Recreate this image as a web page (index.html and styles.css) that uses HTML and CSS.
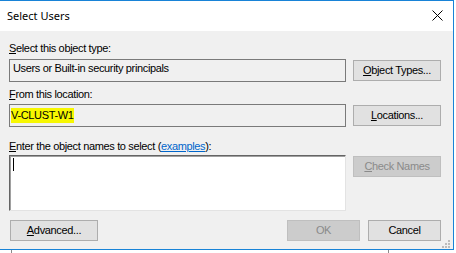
FILE: index.html
```html
<!DOCTYPE html>
<html lang="en">
<head>
    <meta charset="UTF-8">
    <title>Select Users</title>
    <link rel="stylesheet" href="styles.css">
</head>
<body>
    <div class="window">
        <div class="titlebar">
            <span class="title">Select Users</span>
            <svg class="close" width="11" height="11" viewBox="0 0 11 11">
                <path d="M0.5 0.5 L10.5 10.5 M10.5 0.5 L0.5 10.5" stroke="#000" stroke-width="1" fill="none"/>
            </svg>
        </div>

        <div class="dialog">
            <div class="label"><u>S</u>elect this object type:</div>
            <div class="row">
                <div class="field">Users or Built-in security principals</div>
                <button class="btn"><u>O</u>bject Types...</button>
            </div>

            <div class="label label-gap"><u>F</u>rom this location:</div>
            <div class="row row-second">
                <div class="field field-location"><span class="mark">V-CLUST-W1</span></div>
                <button class="btn"><u>L</u>ocations...</button>
            </div>

            <div class="label label-names"><u>E</u>nter the object names to select (<a href="#">examples</a>):</div>
            <div class="row row-names">
                <div class="names"><span class="caret"></span></div>
                <button class="btn btn-check" disabled><u>C</u>heck Names</button>
            </div>

            <div class="footer">
                <button class="btn btn-advanced"><u>A</u>dvanced...</button>
                <div class="footer-right">
                    <button class="btn btn-small" disabled>OK</button>
                    <button class="btn btn-small">Cancel</button>
                </div>
            </div>

            <svg class="grip" width="10" height="9" viewBox="0 0 10 9">
                <rect x="7" y="0" width="2" height="2" fill="#bcbcbc"/>
                <rect x="4" y="3" width="2" height="2" fill="#bcbcbc"/>
                <rect x="7" y="3" width="2" height="2" fill="#bcbcbc"/>
                <rect x="1" y="6" width="2" height="2" fill="#bcbcbc"/>
                <rect x="4" y="6" width="2" height="2" fill="#bcbcbc"/>
                <rect x="7" y="6" width="2" height="2" fill="#bcbcbc"/>
            </svg>
        </div>
    </div>
    <div class="behind">
        <span class="tick"></span>
        <span class="tick tick-right"></span>
    </div>
</body>
</html>
```

FILE: styles.css
```css
body {
    margin: 0;
    padding: 0;
    width: 456px;
    height: 253px;
    overflow: hidden;
    background: #fff;
    font-family: "Liberation Sans", Arial, sans-serif;
    font-size: 11px;
    letter-spacing: -0.35px;
    color: #000;
}

.window {
    width: 454px;
    height: 250px;
    box-sizing: border-box;
    border-top: 1px solid #1883d7;
    border-right: 1px solid #1883d7;
    border-bottom: 1px solid #1883d7;
    display: flex;
    flex-direction: column;
}

.titlebar {
    height: 30px;
    background: #fff;
    display: flex;
    align-items: center;
    justify-content: space-between;
    padding: 0 10px 0 7px;
}

.title {
    font-family: "Noto Sans", "Open Sans", sans-serif;
    font-size: 11px;
    letter-spacing: 0;
    line-height: 16px;
    margin-top: -1px;
}

.close {
    display: block;
    margin-top: -1px;
}

.dialog {
    position: relative;
    flex: 1;
    background: #f0f0f0;
    padding: 11px 12px 0 9px;
    box-sizing: border-box;
}

.label {
    line-height: 13px;
    height: 13px;
    margin-bottom: 4px;
    white-space: nowrap;
}

.label-gap {
    margin-top: 6px;
    margin-bottom: 3px;
}

.label-names {
    margin-top: 13px;
    margin-bottom: 2px;
}

.label a {
    color: #0066cc;
    text-decoration: underline;
}

.row {
    display: flex;
    align-items: center;
    gap: 7px;
    height: 23px;
}

.field {
    width: 337px;
    height: 23px;
    box-sizing: border-box;
    border: 1px solid #7a7a7a;
    padding: 2px 3px 0 3px;
    line-height: 13px;
    white-space: nowrap;
}

.field-location {
    padding: 3px 1px 0 1px;
}

.mark {
    display: inline-block;
    background: #f7f700;
    line-height: 15px;
    height: 15px;
}

.btn {
    width: 88px;
    height: 21px;
    box-sizing: border-box;
    border: 1px solid #adadad;
    background: #e1e1e1;
    font-family: "Liberation Sans", Arial, sans-serif;
    font-size: 11px;
    letter-spacing: -0.35px;
    line-height: 13px;
    color: #000;
    padding: 0;
    margin: 0;
}

.btn:disabled {
    background: #cccccc;
    border-color: #bfbfbf;
    color: #8a8a8a;
}

.row-names {
    align-items: flex-start;
    height: 56px;
}

.names {
    width: 337px;
    height: 56px;
    box-sizing: border-box;
    background: #fff;
    border-top: 1px solid #646464;
    border-left: 1px solid #646464;
    border-right: 1px solid #e3e3e3;
    border-bottom: 1px solid #e3e3e3;
    box-shadow: inset 1px 1px 0 #a0a0a0;
    padding: 2px 0 0 3px;
}

.caret {
    display: block;
    width: 1px;
    height: 13px;
    background: #000;
}

.btn-check {
    margin-top: 1px;
}

.footer {
    display: flex;
    justify-content: space-between;
    margin-top: 9px;
    padding-left: 1px;
}

.footer-right {
    display: flex;
    gap: 8px;
}

.btn-small {
    width: 73px;
}

.grip {
    position: absolute;
    right: 2px;
    bottom: 0;
}

.behind {
    display: flex;
    height: 3px;
    padding-left: 11px;
}

.tick {
    width: 1px;
    height: 3px;
    background: #8a8a8a;
}

.tick-right {
    margin-left: 376px;
}
```
